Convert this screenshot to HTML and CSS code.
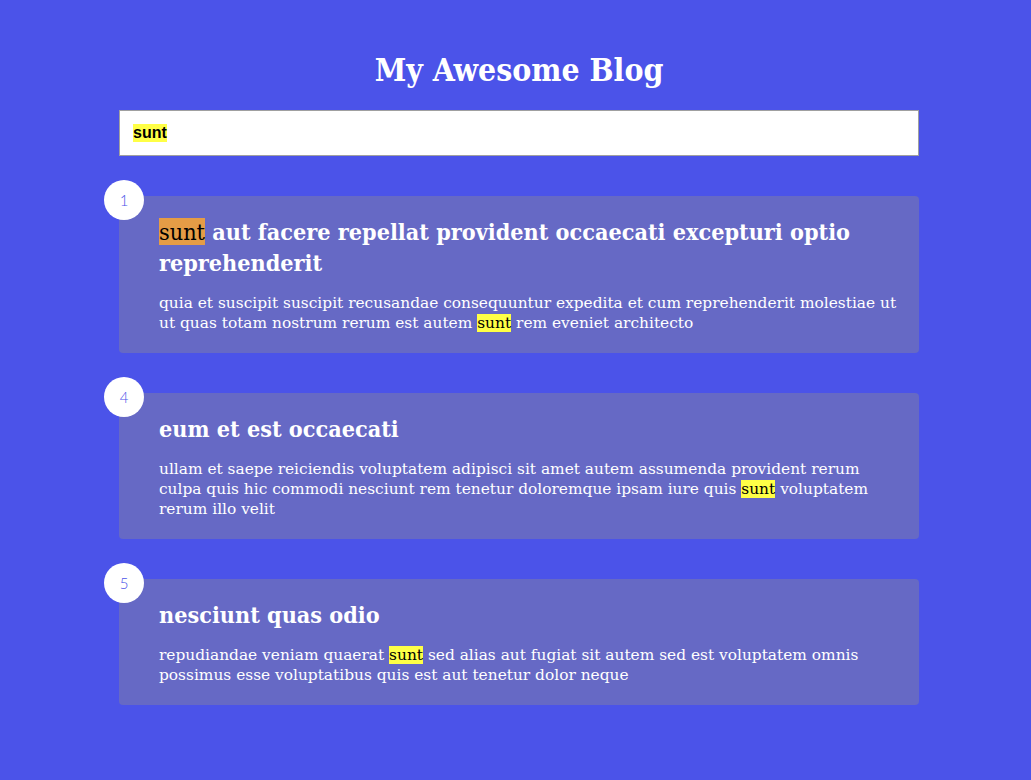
FILE: index.html
```html
<!DOCTYPE html>
<html>
<head>
<meta charset="utf-8">
<link rel="stylesheet" href="styles.css">
</head>
<body>
<div class="page">
  <h1 class="site-title">My Awesome Blog</h1>
  <div class="search"><span class="search-hl">sunt</span></div>
  <div class="posts">
    <article class="post">
      <div class="post-num">1</div>
      <h2 class="post-title"><mark class="hl-title">sunt</mark> aut facere repellat provident occaecati excepturi optio reprehenderit</h2>
      <p class="post-body">quia et suscipit suscipit recusandae consequuntur expedita et cum reprehenderit molestiae ut ut quas totam nostrum rerum est autem <mark class="hl">sunt</mark> rem eveniet architecto</p>
    </article>
    <article class="post">
      <div class="post-num">4</div>
      <h2 class="post-title">eum et est occaecati</h2>
      <p class="post-body">ullam et saepe reiciendis voluptatem adipisci sit amet autem assumenda provident rerum culpa quis hic commodi nesciunt rem tenetur doloremque ipsam iure quis <mark class="hl">sunt</mark> voluptatem rerum illo velit</p>
    </article>
    <article class="post">
      <div class="post-num">5</div>
      <h2 class="post-title">nesciunt quas odio</h2>
      <p class="post-body">repudiandae veniam quaerat <mark class="hl">sunt</mark> sed alias aut fugiat sit autem sed est voluptatem omnis possimus esse voluptatibus quis est aut tenetur dolor neque</p>
    </article>
  </div>
</div>
</body>
</html>
```

FILE: styles.css
```css
html, body {
  margin: 0;
  padding: 0;
}
body {
  background: #4b53e9;
  font-family: "DejaVu Serif", serif;
  color: #ffffff;
  padding-left: 7px;
}
.page {
  width: 800px;
  margin: 0 auto;
  padding-top: 50px;
  padding-bottom: 40px;
}
.site-title {
  margin: 0 0 20px;
  text-align: center;
  font-family: "DejaVu Serif Condensed", "DejaVu Serif", serif;
  font-stretch: condensed;
  font-size: 31.7px;
  line-height: 40px;
  font-weight: bold;
}
.search {
  box-sizing: border-box;
  height: 46px;
  background: #ffffff;
  border: 1px solid #a0a0a0;
  padding: 0 13px;
  display: flex;
  align-items: center;
  font-family: "Liberation Sans", Arial, sans-serif;
  font-weight: bold;
  font-size: 16px;
  color: #000;
}
.search-hl {
  background: #ffff46;
}
.posts {
  display: flex;
  flex-direction: column;
  gap: 40px;
  margin-top: 40px;
}
.post {
  position: relative;
  background: #6669c5;
  border-radius: 4px;
  padding: 20px 20px 20px 40px;
}
.post-num {
  position: absolute;
  left: -15px;
  top: -16px;
  width: 40px;
  height: 40px;
  border-radius: 50%;
  background: #ffffff;
  color: #4b53e9;
  display: flex;
  align-items: center;
  justify-content: center;
  font-family: Lato, "DejaVu Sans", sans-serif;
  font-weight: 300;
  font-size: 15px;
}
.post-title {
  margin: 0 0 15px;
  font-family: "DejaVu Serif Condensed", "DejaVu Serif", serif;
  font-stretch: condensed;
  font-size: 23.2px;
  line-height: 31px;
  font-weight: bold;
}
.hl-title {
  background: #e59c46;
  color: #000;
  font-weight: normal;
}
.post-body {
  margin: 0;
  font-size: 15.4px;
  line-height: 20px;
}
.hl {
  background: #ffff46;
  color: #000;
}
```
